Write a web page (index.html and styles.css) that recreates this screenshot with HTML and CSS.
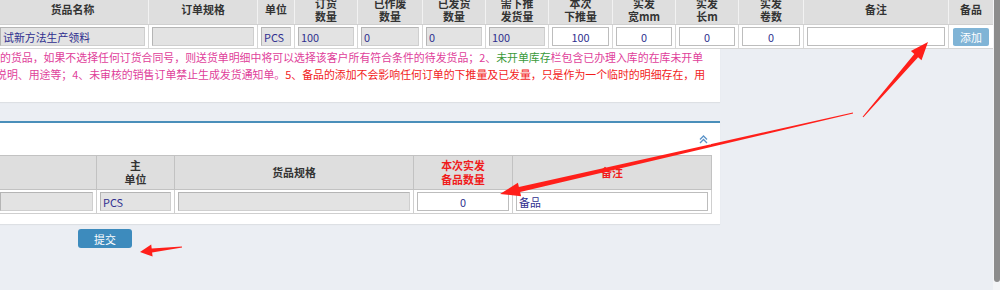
FILE: index.html
```html
<!DOCTYPE html>
<html>
<head>
    <title>发货通知单 - 备品</title>
    <link rel="stylesheet" href="styles.css">
</head>
<body>
    <div class="page">
        <div class="main">
            <section class="panel panel-top">
                <table class="grid grid-top">
                    <colgroup>
                        <col style="width:152px"><col style="width:109px"><col style="width:37px">
                        <col style="width:63px"><col style="width:65px"><col style="width:63px">
                        <col style="width:63px"><col style="width:64px"><col style="width:63px">
                        <col style="width:63px"><col style="width:65px"><col style="width:145px">
                        <col style="width:45px">
                    </colgroup>
                    <tr>
                        <th>货品名称</th>
                        <th>订单规格</th>
                        <th>单位</th>
                        <th>订货<br>数量</th>
                        <th>已作废<br>数量</th>
                        <th>已发货<br>数量</th>
                        <th>需下推<br>发货量</th>
                        <th>本次<br>下推量</th>
                        <th>实发<br>宽mm</th>
                        <th>实发<br>长m</th>
                        <th>实发<br>卷数</th>
                        <th>备注</th>
                        <th>备品</th>
                    </tr>
                    <tr>
                        <td><input class="field readonly" value="试新方法生产领料" readonly></td>
                        <td><input class="field readonly" value="" readonly></td>
                        <td><input class="field readonly" value="PCS" readonly></td>
                        <td><input class="field readonly" value="100" readonly></td>
                        <td><input class="field readonly" value="0" readonly></td>
                        <td><input class="field readonly" value="0" readonly></td>
                        <td><input class="field readonly" value="100" readonly></td>
                        <td><input class="field center" value="100"></td>
                        <td><input class="field center" value="0"></td>
                        <td><input class="field center" value="0"></td>
                        <td><input class="field center" value="0"></td>
                        <td><input class="field" value=""></td>
                        <td><button class="btn-add">添加</button></td>
                    </tr>
                </table>
                <div class="notes">
                    <p>的货品，如果不选择任何订货合同号，则送货单明细中将可以选择该客户所有符合条件的待发货品；2、<span class="green">未开单库存</span>栏包含已办理入库的在库未开单</p>
                    <p class="cut">说明、用途等；4、未审核的销售订单禁止生成发货通知单。<span class="red">5、备品的添加不会影响任何订单的下推量及已发量，只是作为一个临时的明细存在，用</span></p>
                </div>
            </section>

            <section class="panel panel-spare">
                <div class="panel-head">
                    <svg class="collapse" width="9" height="9" viewBox="0 0 9 9">
                        <polyline points="1,4.5 4.5,1 8,4.5" />
                        <polyline points="1,8 4.5,4.5 8,8" />
                    </svg>
                </div>
                <table class="grid grid-spare">
                    <colgroup>
                        <col style="width:100px"><col style="width:78px"><col style="width:239px">
                        <col style="width:99px"><col style="width:199px">
                    </colgroup>
                    <tr>
                        <th></th>
                        <th>主<br>单位</th>
                        <th>货品规格</th>
                        <th class="hot">本次实发<br>备品数量</th>
                        <th class="hot">备注</th>
                    </tr>
                    <tr>
                        <td><input class="field readonly" value="" readonly></td>
                        <td><input class="field readonly" value="PCS" readonly></td>
                        <td><input class="field readonly" value="" readonly></td>
                        <td><input class="field center" value="0"></td>
                        <td><input class="field" value="备品"></td>
                    </tr>
                </table>
            </section>

            <div class="actions">
                <button class="btn-submit">提交</button>
            </div>
        </div>

        <div class="scrollbar"><div class="thumb"></div></div>

        <svg class="marks" width="1000" height="290" viewBox="0 0 1000 290">
            <polygon points="862.6,116.7 914.3,54 910.9,51 928,42 921.5,60.2 918.1,57.2 863.4,117.3" />
            <polygon points="852.9,112.5 518.9,187.1 517.9,182.7 500,194 521.1,196.3 520.1,192 853.1,113.5" />
            <polygon points="181.9,246.6 151.7,248.6 151.2,244.6 140,252 152.6,256.6 152.1,252.6 182.1,247.4" />
        </svg>
    </div>
</body>
</html>
```

FILE: styles.css
```css
* {
    box-sizing: border-box;
}

body {
    margin: 0;
    background: #ebeef3;
    font-family: "Noto Sans CJK SC", "Noto Sans", sans-serif;
    font-size: 10.9px;
    color: #333;
}

.page {
    position: relative;
    display: flex;
    width: 1000px;
    height: 290px;
    overflow: hidden;
}

.main {
    width: 993px;
    height: 290px;
    overflow: hidden;
}

.panel {
    width: 720px;
    background: #fff;
    box-shadow: 0 1px 1px rgba(0, 0, 0, .06);
}

.grid {
    border-collapse: collapse;
    table-layout: fixed;
}

.grid th {
    background: #dedede;
    border: 1px solid #c9c9c9;
    font-weight: bold;
    line-height: 13.5px;
    padding: 0;
    text-align: center;
}

.grid td {
    background: #fff;
    border: 1px solid #d6d6d6;
    padding: 2px 3px;
}

.grid-top {
    width: 997px;
    margin: -5px 0 0 -4px;
}

.grid-top th {
    height: 29px;
    border-color: #cfcfcf #f2f2f2 #d0d0d0 #f2f2f2;
}

.grid-top td {
    height: 24px;
}

.field {
    display: block;
    width: 100%;
    height: 19px;
    margin: 0;
    padding: 0 2px;
    border: 1px solid #bdbdbd;
    background: #fff;
    font-family: "Noto Sans CJK SC", "Noto Sans", sans-serif;
    font-size: 10.9px;
    color: #2f2f8f;
    outline: none;
}

.field.readonly {
    background: #e3e3e3;
    border-color: #b5b5b5 #cfcfcf #cfcfcf #b5b5b5;
}

.field.center {
    text-align: center;
}

.btn-add {
    display: block;
    width: 36px;
    height: 18px;
    margin: 0 0 0 1px;
    padding: 0;
    border: none;
    border-radius: 2px;
    background: #80b4d6;
    color: #fff;
    font-family: "Noto Sans CJK SC", sans-serif;
    font-size: 10.9px;
}

.notes {
    width: 720px;
    overflow: hidden;
    padding-bottom: 19px;
    white-space: nowrap;
    color: #e0409a;
}

.notes p {
    margin: 0;
    line-height: 17px;
}

.notes .cut {
    text-indent: -4px;
}

.green {
    color: #3a9a3a;
}

.red {
    color: #f21c1c;
}

.panel-spare {
    margin-top: 19px;
    border-top: 2px solid #4a8fba;
    padding-bottom: 10px;
    overflow: hidden;
}

.panel-head {
    display: flex;
    justify-content: flex-end;
    align-items: center;
    height: 32px;
    padding-right: 12px;
}

.collapse polyline {
    fill: none;
    stroke: #5b93c8;
    stroke-width: 1.3;
}

.grid-spare {
    width: 715px;
    margin-left: -4px;
}

.grid-spare th {
    height: 34px;
    border-color: #c2c2c2;
}

.grid-spare th.hot {
    color: #f01c1c;
}

.grid-spare td {
    height: 23px;
    border-color: #cfcfcf;
}

.actions {
    padding: 5px 0 0 78px;
}

.btn-submit {
    width: 54px;
    height: 19px;
    padding: 0;
    border: none;
    border-radius: 3px;
    background: #3d8bbd;
    color: #fff;
    font-family: "Noto Sans CJK SC", sans-serif;
    font-size: 10.9px;
}

.scrollbar {
    width: 7px;
    height: 290px;
    background: #f3f4f6;
}

.thumb {
    width: 6px;
    height: 282px;
    margin-left: 1px;
    background: #8c8c8c;
    border-radius: 0 0 3px 3px;
}

.marks {
    position: absolute;
    top: 0;
    left: 0;
    pointer-events: none;
}

.marks polygon {
    fill: #ff1f1a;
}
```
